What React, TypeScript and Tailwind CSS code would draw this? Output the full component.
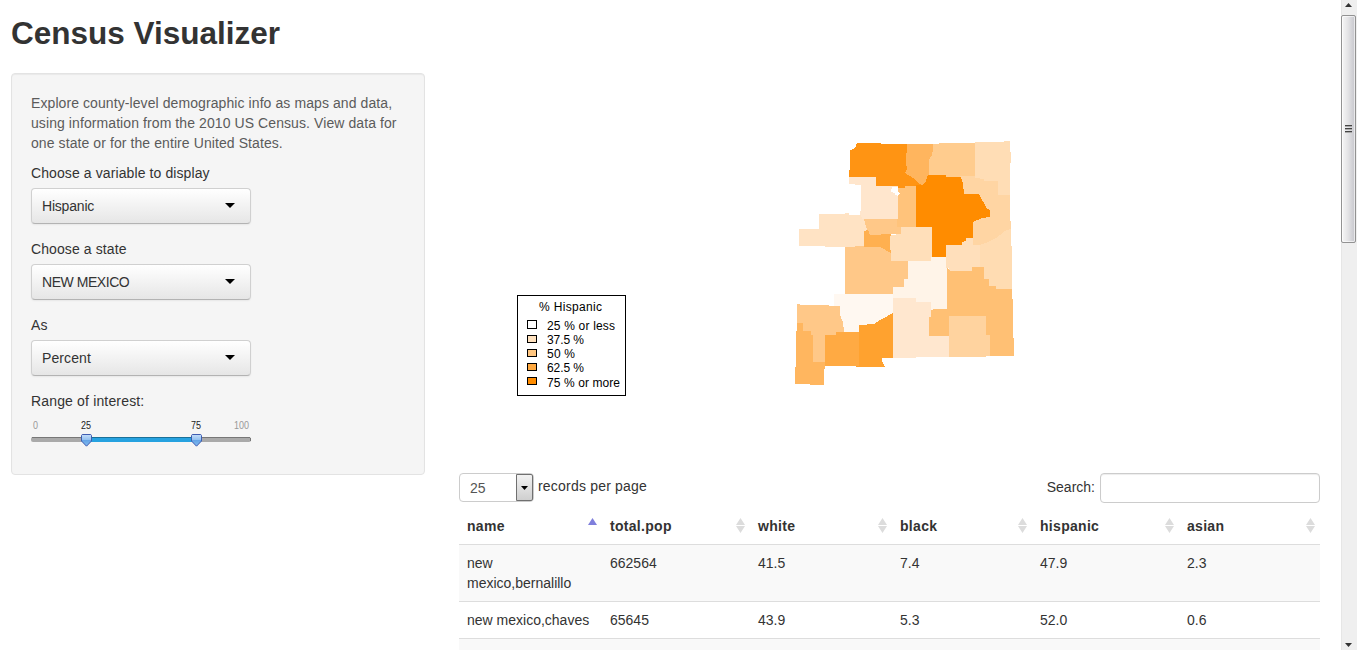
import React from "react";

type County = { name: string; fill: string; points: string };

const counties: County[] = [
  { name: "northwest", fill: "#ff9413", points: "856,144 857,143 881,143 881,144 908,144 908,172 917,180 922,185 916,186 905,186 905,188 898,188 898,185.5 876,185.5 876,176.5 849,176.5 849,170 850,170 850,150 853,149 856,147" },
  { name: "taos", fill: "#ffb55e", points: "907,144 933,144 933,149 932,155 929,160 929,175 927,176 926,183 922,185 919,184 915,179 905,173 907,169 906,162" },
  { name: "colfax", fill: "#ffcc8e", points: "933,144 939,144 939,143 975,143 975,177 946,177 946,175 929,175 929,160 932,155 933,149" },
  { name: "quay", fill: "#ffd5a3", points: "960,176 975,176 975,178 984,178 984,180 998,180 998,195 1010,195 1010,221 1011,222 1011,230 1004,232 1000,236 996,239 988,243 980,246 973,246 960,222" },
  { name: "union", fill: "#ffddb5", points: "975,143 975,142 1004,142 1004,141 1010,141 1010,152 1011,152 1011,162 1010,163 1010,195 998,195 998,181 984,181 984,179 975,178" },
  { name: "roosevelt", fill: "#ffdcb2", points: "1011,229 1012,262 1012,289 996,289 996,286 989,286 989,279 984,279 984,267 980,267 980,245 988,242 996,238 1000,235 1004,231" },
  { name: "debaca", fill: "#ffdfbb", points: "946,245 962,245 962,242 966,241 966,238 973,237 973,245 980,245 980,267 972,267 972,271 950,271 949,268 946,268" },
  { name: "sanmiguel", fill: "#ff8c00", points: "927,176 929,175 946,175 946,177 961,177 963,183 964,194 979,194 987,209 990,210 990,217 982,218 973,222 973,238 966,238 966,241 962,242 962,245 946,245 946,257 931,257 931,227 916,227 916,185 922,185 926,182" },
  { name: "santafe", fill: "#ffc37b", points: "898,188 905,188 905,186 916,186 916,227 897,227" },
  { name: "sandoval", fill: "#ffe6cd", points: "849,177 876,177 876,186 898,186 897.5,219 862,219 860,215 861,208 861,185 849,184" },
  { name: "losalamos", fill: "#ffffff", points: "892,186.5 898,186.5 898,192 900,193 898,196 895,195 895,193 891,192" },
  { name: "cibola", fill: "#ffe3c4", points: "819,214 845,214 845,213 849,213 849,215 861,215 862,219 864,219 866,227 868,231 864,231 864,247 825,247 825,246 799,246 799,229 819,229" },
  { name: "bernalillo", fill: "#ffc888", points: "864,219 897,219 897,227 902,227 902,234 870,235 866,227" },
  { name: "socorro", fill: "#ffc888", points: "845,247 864,246 891,246 891,261 908,261 908,279 904,279 904,287 893,287 893,294 845,294" },
  { name: "valencia", fill: "#ffb050", points: "864,231 868,230 870,235 891,234 891,253 882,248 880,247 864,247" },
  { name: "torrance", fill: "#ffdfba", points: "891,235 901,234 901,227 932,227 932,257 931,261 891,261 891,252 890,248 890,238" },
  { name: "lincoln", fill: "#fff4e8", points: "908,261 931,261 931,257 946,257 946,268 947,268 947,309 935,309 935,310 931,310 931,302 916,302 916,298 893,298 893,287 904,287 904,279 908,279" },
  { name: "sierra", fill: "#fff8f1", points: "834,294 893,294 893,313 875,324 859,325 859,332 844,332 840,315 840,306 834,306" },
  { name: "catron", fill: "#ffc888", points: "797,304 800,304 800,305 829,305 829,306 840,306 840,315 843,322 844,332 836,332 836,336 826,336 826,363 813,363 813,336 811,336 811,332 803,332 803,324 797,324" },
  { name: "hidalgo", fill: "#ffb65f", points: "797,323 803,323 803,331 811,331 811,335 813,335 813,362 825,362 825,369 824,369 824,385 810,385 810,384 795,384 795,367 796,367 796,331 797,331" },
  { name: "luna", fill: "#ffaa43", points: "825,335 836,335 836,332 859,332 859,366 825,366" },
  { name: "donaana", fill: "#ffa22f", points: "859,325 875,324 875,323 893,313 893,358 882,358 882,361 885,367 856,367 856,366 859,366" },
  { name: "chaves", fill: "#ffc074", points: "947,268 950,271 972,271 972,267 984,267 984,279 989,279 989,286 996,286 996,289 1012,289 1012,299 1013,299 1013,338 1014,338 1014,356 949,356 949,336 929,336 929,317 931,317 931,310 935,309 947,309" },
  { name: "otero", fill: "#ffe7cf", points: "893,298 916,298 916,302 931,302 931,317 929,317 929,336 949,336 949,357 916,357 916,358 893,358" },
  { name: "eddy", fill: "#ffd39f", points: "949,316 986,316 986,335 990,335 990,356 981,357 949,357" },
];

const legend = [
  { label: "25 % or less", fill: "#ffffff", y: 320, base: 330, w: 68 },
  { label: "37.5 %", fill: "#ffe2bf", y: 335, base: 344, w: 37 },
  { label: "50 %", fill: "#ffc680", y: 349, base: 358, w: 28 },
  { label: "62.5 %", fill: "#ffa940", y: 363, base: 372, w: 37 },
  { label: "75 % or more", fill: "#ff8c00", y: 377, base: 387, w: 73 },
];

function CountyMap() {
  return (
    <svg className="block h-[400px] w-[861px]" viewBox="459 73 861 400">
      <g shapeRendering="crispEdges">
        {counties.map((c) => (
          <polygon key={c.name} points={c.points} fill={c.fill} />
        ))}
      </g>
      <rect x="517.5" y="295.5" width="108" height="100" fill="#fff" stroke="#000" />
      <g fontFamily="Liberation Sans, Arial, sans-serif" fontSize="12" fill="#000">
        <text x="539" y="311" textLength="63">% Hispanic</text>
        {legend.map((l, i) => (
          <g key={l.label}>
            <rect x="527.5" y={l.y + 0.5} width="9" height={i === 0 ? 8 : 7} fill={l.fill} stroke="#000" />
            <text x="547" y={l.base} textLength={l.w}>{l.label}</text>
          </g>
        ))}
      </g>
    </svg>
  );
}

function Picker({ label, value, tracking }: { label: string; value: string; tracking: string }) {
  return (
    <div className="mb-[15px]">
      <div className="mb-[5px] h-5 tracking-[0.1px]">{label}</div>
      <button className="flex h-9 w-[220px] items-center justify-between rounded border border-[#d0d0d0] border-b-[#b3b3b3] bg-linear-to-b from-white to-[#e6e6e6] pr-[15px] pl-2.5 text-left shadow-[0_1px_2px_rgba(0,0,0,0.06)]">
        <span className={tracking}>{value}</span>
        <svg className="mb-0.5 h-[5px] w-[10px]" viewBox="0 0 10 5"><path d="M0 0h10L5 5z" fill="#000" /></svg>
      </button>
    </div>
  );
}

function RangeSlider() {
  return (
    <svg className="block h-[34px] w-[222px]" viewBox="31 416 222 34">
      <defs>
        <linearGradient id="knob" x1="0" y1="0" x2="0" y2="1">
          <stop offset="0" stopColor="#c5defa" />
          <stop offset="0.45" stopColor="#94c1f0" />
          <stop offset="0.5" stopColor="#64a4e6" />
          <stop offset="1" stopColor="#82bbf0" />
        </linearGradient>
      </defs>
      <g fontFamily="Liberation Sans, Arial, sans-serif" fontSize="10" >
        <text x="33" y="429" fill="#999" textLength="5" lengthAdjust="spacingAndGlyphs">0</text>
        <text x="81" y="429" fill="#222" textLength="10" lengthAdjust="spacingAndGlyphs">25</text>
        <text x="191" y="429" fill="#222" textLength="10" lengthAdjust="spacingAndGlyphs">75</text>
        <text x="234" y="429" fill="#999" textLength="15" lengthAdjust="spacingAndGlyphs">100</text>
      </g>
      <rect x="31" y="437" width="220" height="5" rx="2" fill="#aaaaaa" />
      <path d="M32 437.5h218" stroke="#777" />
      <path d="M250.5 438v3" stroke="#777" />
      <path d="M87 439.5h109" stroke="#26a2e0" strokeWidth="5" />
      <path d="M87 437.5h109" stroke="#1a7199" />
      {[81, 191].map((x) => (
        <path key={x} transform={`translate(${x} 434)`} d="M1.2.5h8.6l.7 1v5.5l-5 5.2L.5 7V1.5z" fill="url(#knob)" stroke="#3f5cb0" />
      ))}
    </svg>
  );
}

const columns = [
  { key: "name", width: "w-[143px]" },
  { key: "total.pop", width: "w-[148px]" },
  { key: "white", width: "w-[142px]" },
  { key: "black", width: "w-[140px]" },
  { key: "hispanic", width: "w-[147px]" },
  { key: "asian", width: "w-[141px]" },
];

const rows = [
  ["new mexico,bernalillo", "662564", "41.5", "7.4", "47.9", "2.3"],
  ["new mexico,chaves", "65645", "43.9", "5.3", "52.0", "0.6"],
  ["", "", "", "", "", ""],
];

function SortIcon({ active }: { active: boolean }) {
  return (
    <svg className="mr-[5px] h-[15px] w-[9px]" viewBox="0 0 9 15">
      {active ? (
        <path d="M4.5 0 9 7H0z" fill="#7f7fdc" />
      ) : (
        <path d="M4.5 0 9 7H0zM0 8h9l-4.5 7z" fill="#dcdcdc" />
      )}
    </svg>
  );
}

function DataTable() {
  return (
    <table className="w-[861px] table-fixed border-collapse">
      <thead>
        <tr>
          {columns.map((c) => (
            <th key={c.key} className={`${c.width} h-9 p-0 pl-2 text-left font-bold tracking-[0.3px]`}>
              <div className="flex items-center justify-between">
                <span>{c.key}</span>
                <SortIcon active={c.key === "name"} />
              </div>
            </th>
          ))}
        </tr>
      </thead>
      <tbody>
        {rows.map((r, i) => (
          <tr key={i} className="h-[37px] border-t border-[#ddd] align-top odd:bg-[#f9f9f9]">
            {r.map((v, j) => (
              <td key={j} className="p-2">{v}</td>
            ))}
          </tr>
        ))}
      </tbody>
    </table>
  );
}

function Scrollbar() {
  return (
    <div className="mr-[3px] flex h-full w-4 shrink-0 flex-col bg-[#efefef] shadow-[inset_1px_0_0_#e6e6e6]">
      <svg className="mt-[3px] ml-1 h-1 w-[7px] shrink-0" viewBox="0 0 7 4"><path d="M3.5 0 7 4H0z" fill="#333" /></svg>
      <div className="mt-2 flex h-[228px] w-[15px] shrink-0 flex-col items-center justify-center gap-px rounded-xs border border-[#929292] bg-linear-to-r from-[#f6f6f6] via-[#e4e4e6] via-45% to-[#c6c6cc] shadow-[inset_0_0_0_1px_rgba(255,255,255,0.6)]">
        <span className="h-0.5 w-[7px] border-t border-[#444] bg-[#aaa]" />
        <span className="h-0.5 w-[7px] border-t border-[#444] bg-[#aaa]" />
        <span className="h-0.5 w-[7px] border-t border-[#444] bg-[#aaa]" />
      </div>
      <svg className="mt-auto mb-[3px] ml-1 h-1 w-[7px] shrink-0" viewBox="0 0 7 4"><path d="M0 0h7L3.5 4z" fill="#333" /></svg>
    </div>
  );
}

export default function App() {
  return (
    <div className="flex h-[650px] w-[1360px] overflow-hidden bg-white font-['Liberation_Sans',Arial,sans-serif] text-[14px] leading-5 text-[#333]">
      <div className="flex min-w-0 flex-1 flex-col pl-[11px]">
        <h2 className="h-[73px] shrink-0 pt-[13px] text-[31.5px] leading-10 font-bold">Census Visualizer</h2>
        <div className="flex gap-[34px]">
          <aside className="h-[402px] w-[414px] shrink-0 rounded border border-[#e3e3e3] bg-[#f5f5f5] p-[19px] shadow-[inset_0_1px_1px_rgba(0,0,0,0.05)]">
            <p className="mb-2.5 tracking-[0.085px] whitespace-nowrap text-[#5b5b5b]">
              Explore county-level demographic info as maps and data,<br />
              using information from the 2010 US Census. View data for<br />
              one state or for the entire United States.
            </p>
            <Picker label="Choose a variable to display" value="Hispanic" tracking="tracking-[-0.2px]" />
            <Picker label="Choose a state" value="NEW MEXICO" tracking="tracking-[-0.45px]" />
            <Picker label="As" value="Percent" tracking="tracking-[0.1px]" />
            <div className="mb-[5px] h-5 tracking-[0.16px]">Range of interest:</div>
            <RangeSlider />
          </aside>
          <main className="w-[861px] shrink-0">
            <CountyMap />
            <div className="flex h-[35px] items-start justify-between">
              <div className="flex">
                <div className="mr-1 flex h-[29px] w-[75px] items-stretch justify-between rounded border border-[#ccc] pl-2.5 text-[#555]">
                  <span className="pt-1">25</span>
                  <span className="flex w-[17px] items-center justify-center rounded-r-xs border border-[#707070] bg-linear-to-b from-[#f2f2f2] to-[#cfcfcf]">
                    <svg className="h-1 w-[7px]" viewBox="0 0 7 4"><path d="M0 0h7L3.5 4z" fill="#000" /></svg>
                  </span>
                </div>
                <span className="pt-[3px] tracking-[0.2px]">records per page</span>
              </div>
              <label className="flex">
                <span className="mr-[5px] pt-1">Search:</span>
                <input className="h-[30px] w-[220px] rounded border border-[#ccc] bg-white shadow-[inset_0_1px_1px_rgba(0,0,0,0.075)]" />
              </label>
            </div>
            <DataTable />
          </main>
        </div>
      </div>
      <Scrollbar />
    </div>
  );
}
